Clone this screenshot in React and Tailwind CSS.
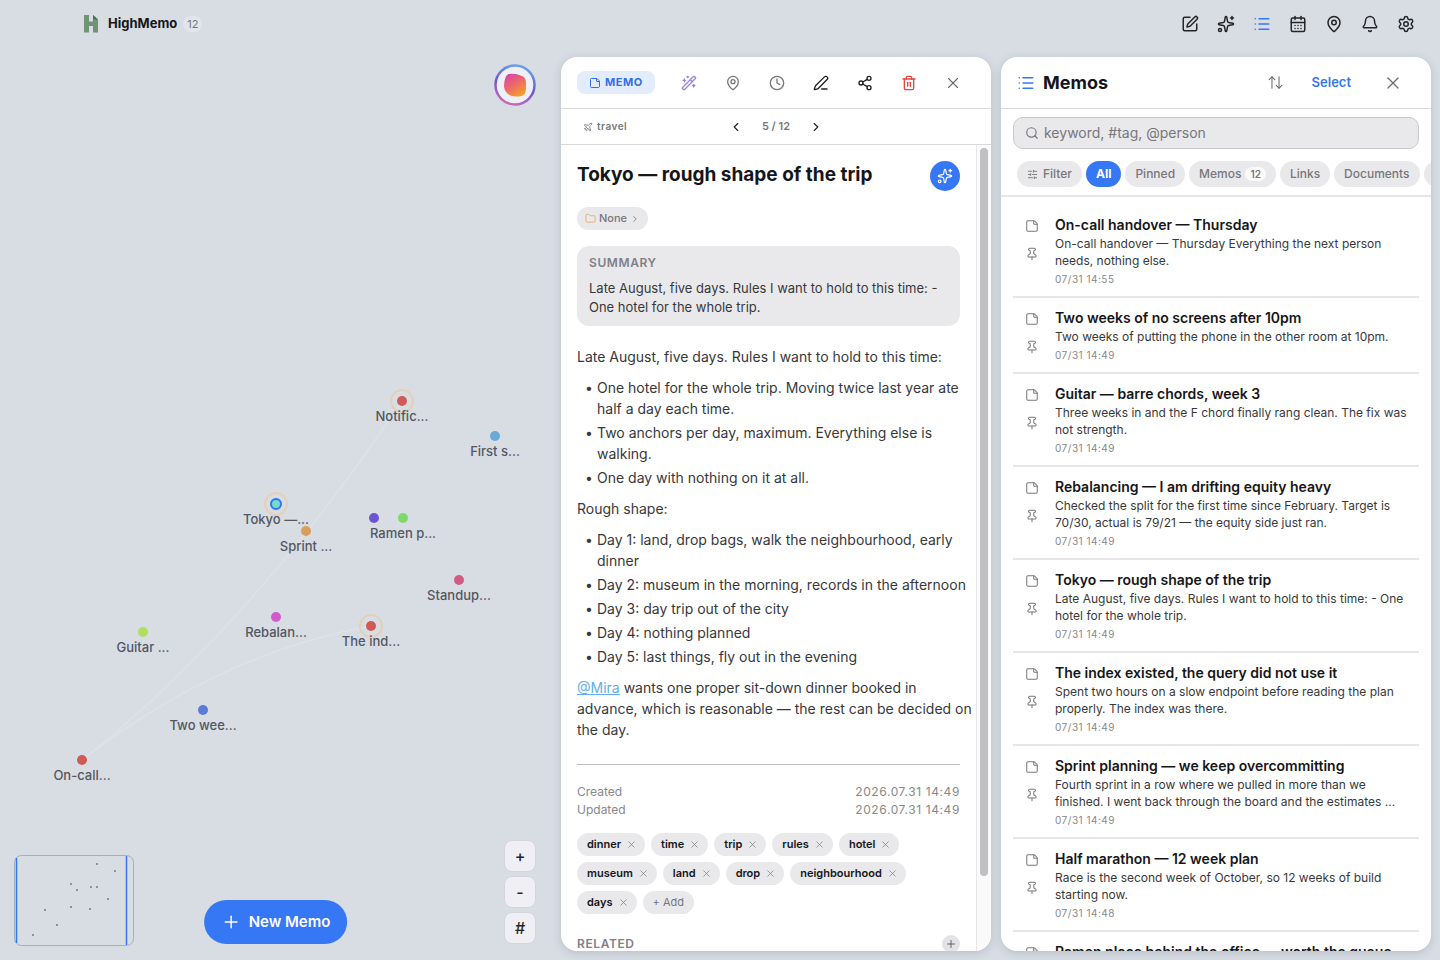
import React, { useState } from 'react'
import {
  ArrowUpDown, Bell, CalendarDays, ChevronLeft, ChevronRight, Clock, Folder, List, MapPin,
  PenLine, Pin, Plane, Plus, Search, Settings, Share2, SlidersHorizontal, Sparkles,
  SquarePen, StickyNote, Trash2, WandSparkles, X,
} from 'lucide-react'

const NAV = [
  { label: 'Write', icon: SquarePen },
  { label: 'Assistant', icon: Sparkles },
  { label: 'Memos', icon: List, active: true },
  { label: 'Calendar', icon: CalendarDays },
  { label: 'Places', icon: MapPin },
  { label: 'Notifications', icon: Bell },
  { label: 'Settings', icon: Settings },
]

const ACTIONS = [
  { label: 'Magic edit', icon: WandSparkles, color: 'text-[#9c87e0]' },
  { label: 'Location', icon: MapPin, color: 'text-[#77777b]' },
  { label: 'History', icon: Clock, color: 'text-[#77777b]' },
  { label: 'Edit', icon: PenLine, color: 'text-[#1f1f21]' },
  { label: 'Share', icon: Share2, color: 'text-[#1f1f21]' },
  { label: 'Delete', icon: Trash2, color: 'text-[#e5453b]' },
]

const NODES = [
  { label: 'Notific...', x: 402, y: 353, color: '#d05a55', ring: true },
  { label: 'First s...', x: 495, y: 388, color: '#6aa9d8' },
  { label: 'Tokyo —...', x: 276, y: 456, color: '#76dbc8', ring: true, selected: true },
  { label: 'Sprint ...', x: 306, y: 483, color: '#d89e5c' },
  { label: '', x: 374, y: 470, color: '#6d54d0' },
  { label: 'Ramen p...', x: 403, y: 470, color: '#7fd966' },
  { label: 'Standup...', x: 459, y: 532, color: '#d05c85' },
  { label: 'Rebalan...', x: 276, y: 569, color: '#d05ccc' },
  { label: 'The ind...', x: 371, y: 578, color: '#d05a55', ring: true },
  { label: 'Guitar ...', x: 143, y: 584, color: '#b0df60' },
  { label: 'Two wee...', x: 203, y: 662, color: '#5b7bd8' },
  { label: 'On-call...', x: 82, y: 712, color: '#d05a55' },
]

const MAP_DOTS = [
  [83, 9], [101, 16], [57, 29], [63, 35], [77, 32], [83, 32],
  [94, 44], [57, 52], [76, 54], [31, 55], [43, 70], [19, 80],
]

const TAGS = ['dinner', 'time', 'trip', 'rules', 'hotel', 'museum', 'land', 'drop', 'neighbourhood', 'days']

const RULES = [
  'One hotel for the whole trip. Moving twice last year ate half a day each time.',
  'Two anchors per day, maximum. Everything else is walking.',
  'One day with nothing on it at all.',
]

const DAYS = [
  'Day 1: land, drop bags, walk the neighbourhood, early dinner',
  'Day 2: museum in the morning, records in the afternoon',
  'Day 3: day trip out of the city',
  'Day 4: nothing planned',
  'Day 5: last things, fly out in the evening',
]

const FILTERS = ['All', 'Pinned', 'Memos', 'Links', 'Documents', 'Images']

const MEMOS = [
  { title: 'On-call handover — Thursday', text: 'On-call handover — Thursday Everything the next person needs, nothing else.', date: '07/31 14:55' },
  { title: 'Two weeks of no screens after 10pm', text: 'Two weeks of putting the phone in the other room at 10pm.', date: '07/31 14:49' },
  { title: 'Guitar — barre chords, week 3', text: 'Three weeks in and the F chord finally rang clean. The fix was not strength.', date: '07/31 14:49' },
  { title: 'Rebalancing — I am drifting equity heavy', text: 'Checked the split for the first time since February. Target is 70/30, actual is 79/21 — the equity side just ran.', date: '07/31 14:49' },
  { title: 'Tokyo — rough shape of the trip', text: 'Late August, five days. Rules I want to hold to this time: - One hotel for the whole trip.', date: '07/31 14:49' },
  { title: 'The index existed, the query did not use it', text: 'Spent two hours on a slow endpoint before reading the plan properly. The index was there.', date: '07/31 14:49' },
  { title: 'Sprint planning — we keep overcommitting', text: 'Fourth sprint in a row where we pulled in more than we finished. I went back through the board and the estimates ...', date: '07/31 14:49' },
  { title: 'Half marathon — 12 week plan', text: 'Race is the second week of October, so 12 weeks of build starting now.', date: '07/31 14:48' },
  { title: 'Ramen place behind the office — worth the queue', text: 'Opens at 11:30 and the line starts before that.', date: '07/31 14:48' },
]

function Header() {
  return (
    <header className="flex h-12 shrink-0 items-center justify-between pl-[82px] pr-4">
      <div className="flex items-center">
        <svg viewBox="0 0 18 20" className="mr-2 h-5 w-[18px]" aria-hidden="true">
          <path d="M2 1h5v6.500h4V1l5 4.500V18.500h-5v-6.500h-4v6.500h-5z" fill="#6f9473" />
          <path d="M11 1l5 4.500h-5z" fill="#4b7352" />
        </svg>
        <h1 className="text-[13px] font-bold text-[#161618]">HighMemo</h1>
        <span className="ml-1.5 rounded-full bg-[#e3e5eb] px-1 text-[11px] leading-4 text-[#76767c]">12</span>
      </div>
      <nav className="flex" aria-label="Main">
        {NAV.map(({ label, icon: Icon, active }) => (
          <button key={label} aria-label={label} className={`flex h-9 w-9 items-center justify-center ${active ? 'text-[#3577f1]' : 'text-[#252528]'}`}>
            <Icon size={18} strokeWidth={2} />
          </button>
        ))}
      </nav>
    </header>
  )
}

function MiniMap() {
  return (
    <svg viewBox="0 0 121 91" className="absolute bottom-3.5 left-3.5 h-[91px] w-[121px]" role="img" aria-label="Map overview">
      <rect x="0.5" y="0.5" width="119" height="90" rx="7" fill="none" stroke="#a9adb5" />
      <path d="M2.500 3v85M112.500 1v89" stroke="#3577f1" strokeWidth="1.500" />
      {MAP_DOTS.map(([x, y]) => (
        <circle key={`${x}-${y}`} cx={x} cy={y} r="0.900" fill="#6c7078" />
      ))}
    </svg>
  )
}

function MemoMap() {
  return (
    <section className="relative min-w-0" aria-label="Memo map">
      <svg className="absolute inset-0 h-full w-full" aria-hidden="true">
        <path d="M82 712Q250 580 402 353M82 712Q220 605 371 578" fill="none" stroke="#dee2e8" strokeWidth="1.500" />
      </svg>

      {NODES.map(n => (
        <div key={`${n.x}-${n.y}`} className="absolute h-0 w-0" style={{ left: n.x, top: n.y }}>
          {n.ring && <span className="absolute -left-3 -top-3 h-6 w-6 rounded-full border-2 border-[#e2d0b8]" />}
          <span
            className={`absolute rounded-full ${n.selected ? '-left-1.5 -top-1.5 h-3 w-3 border-2 border-[#2f74f0]' : '-left-[5px] -top-[5px] h-2.5 w-2.5'}`}
            style={{ backgroundColor: n.color }}
          />
          <span className="absolute left-0 top-1.5 -translate-x-1/2 whitespace-nowrap text-[13px] font-medium leading-[18px] text-[#53575f]">{n.label}</span>
        </div>
      ))}

      <button aria-label="Account" className="absolute right-[15px] top-4 h-[42px] w-[42px]">
        <svg viewBox="0 0 42 42" aria-hidden="true">
          <defs>
            <linearGradient id="ring" x1="0.700" y1="0" x2="0.400" y2="1">
              <stop offset="0" stopColor="#67a2ef" />
              <stop offset="0.550" stopColor="#6d58cf" />
              <stop offset="1" stopColor="#c76bb8" />
            </linearGradient>
            <linearGradient id="blob" x1="0.200" y1="0" x2="0.800" y2="1">
              <stop offset="0" stopColor="#d945a5" />
              <stop offset="0.500" stopColor="#ee6b62" />
              <stop offset="1" stopColor="#f5a524" />
            </linearGradient>
          </defs>
          <circle cx="21" cy="21" r="19.500" fill="#efeff7" stroke="url(#ring)" strokeWidth="2.500" />
          <path d="M14.500 10q2-0.500 7.500 0q3 0.500 7 2.500q3 1.500 3 6.500v6q0 4-2.500 6q-2 1.500-7.500 1.500q-5 0-8-2.500q-4-3.500-4-8q0-5 1.500-8.500q1-3 3-3.500z" fill="url(#blob)" />
        </svg>
      </button>

      <MiniMap />
      <button className="absolute bottom-4 left-1/2 flex h-11 -translate-x-1/2 items-center gap-2 whitespace-nowrap rounded-full bg-[#3577f5] px-[17px] text-[15px] font-semibold text-white">
        <Plus size={20} strokeWidth={1.75} />
        New Memo
      </button>
      <div className="absolute bottom-4 right-[15px] flex flex-col gap-1">
        {['+', '-', '#'].map(c => (
          <button key={c} className="h-8 w-8 rounded-lg border border-[#d3d6dd] bg-[#efeff4] text-base font-medium leading-none text-[#252528]">{c}</button>
        ))}
      </div>
    </section>
  )
}

function BulletList({ items }) {
  return (
    <ul className="space-y-[3px] pl-2">
      {items.map(text => (
        <li key={text} className="flex before:w-3 before:shrink-0 before:content-['•']">{text}</li>
      ))}
    </ul>
  )
}

function MemoDetail() {
  return (
    <article className="my-[9px] flex min-h-0 min-w-0 flex-col overflow-hidden rounded-2xl bg-white shadow-[0_2px_10px_rgba(60,70,90,0.2)]">
      <div className="flex h-13 shrink-0 items-center justify-between border-b border-[#d9d9dd] px-4">
        <button className="flex h-[23px] items-center gap-1 rounded-lg bg-[#e3ecfd] px-3 text-[11px] font-bold tracking-wider text-[#2f6fe8]">
          <StickyNote size={12} />
          MEMO
        </button>
        <div className="flex">
          {ACTIONS.map(({ label, icon: Icon, color }) => (
            <button key={label} aria-label={label} className={`flex h-9 w-11 items-center justify-center ${color}`}>
              <Icon size={16} strokeWidth={2} />
            </button>
          ))}
          <button aria-label="Close memo" className="flex h-9 w-11 items-center justify-center text-[#6b6b6f]">
            <X size={18} strokeWidth={1.5} />
          </button>
        </div>
      </div>

      <div className="grid h-9 shrink-0 grid-cols-3 items-center border-b border-[#d9d9dd] px-[22px] text-[#77777b]">
        <span className="flex items-center gap-1 text-[10px] font-semibold tracking-wider">
          <Plane size={10} />
          travel
        </span>
        <div className="flex items-center justify-center gap-[19px] text-[11px] font-semibold">
          <button aria-label="Previous memo" className="text-[#252528]"><ChevronLeft size={14} /></button>
          <span>5 / 12</span>
          <button aria-label="Next memo" className="text-[#252528]"><ChevronRight size={14} /></button>
        </div>
      </div>

      <div className="flex min-h-0 flex-1">
        <div className="min-w-0 flex-1 overflow-hidden px-4 pt-4 text-[#38383b]">
          <div className="flex items-start justify-between">
            <h2 className="text-[19px] font-bold leading-7 text-[#161618]">Tokyo — rough shape of the trip</h2>
            <button aria-label="Ask assistant" className="flex h-[30px] w-[30px] items-center justify-center rounded-full bg-[#3577f5] text-white">
              <Sparkles size={16} strokeWidth={1.75} />
            </button>
          </div>

          <button className="mt-4 flex h-[23px] items-center gap-[3px] rounded-full bg-[#e9e9ec] px-2 text-[11px] font-medium text-[#77777b]">
            <Folder size={11} className="text-[#e3ad72]" />
            None
            <ChevronRight size={10} />
          </button>

          <div className="mt-4 rounded-xl bg-[#e9e9ec] px-3 pb-[9px] pt-2">
            <h3 className="text-xs font-semibold leading-[18px] tracking-wider text-[#808085]">SUMMARY</h3>
            <p className="mt-[7px] text-[13px] leading-[19px]">Late August, five days. Rules I want to hold to this time: - One hotel for the whole trip.</p>
          </div>

          <div className="-mr-3.5 mt-5 space-y-2.5 text-sm leading-[21px]">
            <p>Late August, five days. Rules I want to hold to this time:</p>
            <BulletList items={RULES} />
            <p>Rough shape:</p>
            <BulletList items={DAYS} />
            <p>
              <a href="#mira" className="text-[#64aee6] underline">@Mira</a> wants one proper sit-down dinner booked in advance, which is reasonable — the rest can be decided on the day.
            </p>
          </div>

          <dl className="mt-6 grid grid-cols-2 border-t border-[#bdbdc1] pt-[18px] text-xs leading-[18px] text-[#88888c]">
            <dt>Created</dt>
            <dd className="text-right tracking-wider">2026.07.31 14:49</dd>
            <dt>Updated</dt>
            <dd className="text-right tracking-wider">2026.07.31 14:49</dd>
          </dl>

          <div className="mt-3.5 flex flex-wrap gap-1.5">
            {TAGS.map(t => (
              <span key={t} className="flex h-[23px] items-center gap-[5px] rounded-full bg-[#e9e9ec] pl-2.5 pr-2 text-[11px] font-semibold text-[#161618]">
                {t}
                <button aria-label={`Remove ${t}`} className="text-[#77777b]"><X size={11} strokeWidth={1.5} /></button>
              </span>
            ))}
            <button className="h-[23px] rounded-full bg-[#e9e9ec] px-2.5 text-[11px] text-[#77777b]">+ Add</button>
          </div>

          <div className="mt-5 flex h-5 items-center justify-between">
            <h3 className="text-xs font-semibold leading-[18px] tracking-wider text-[#808085]">RELATED</h3>
            <button aria-label="Add related memo" className="flex h-[18px] w-[18px] items-center justify-center rounded-full bg-[#e3e3e6] text-[#55555a]">
              <Plus size={12} strokeWidth={1.75} />
            </button>
          </div>
        </div>
        <div className="w-[15px] shrink-0 border-l border-[#e6e6e8] bg-[#fafafa] px-[3px] py-[3px]">
          <div className="h-[91%] w-2 rounded-full bg-[#c0c0c2]" />
        </div>
      </div>
    </article>
  )
}

function MemoList() {
  const [filter, setFilter] = useState('All')

  return (
    <aside className="my-[9px] flex min-h-0 min-w-0 flex-col overflow-hidden rounded-2xl bg-white shadow-[0_2px_10px_rgba(60,70,90,0.2)]">
      <div className="flex h-13 shrink-0 items-center justify-between border-b border-[#d9d9dd] px-4">
        <h2 className="flex items-center gap-2 text-lg font-bold text-[#161618]">
          <List size={18} className="text-[#3577f1]" />
          Memos
        </h2>
        <div className="flex items-center text-[#6b6b6f]">
          <button aria-label="Sort" className="flex w-9 justify-center"><ArrowUpDown size={17} strokeWidth={1.5} /></button>
          <button className="pl-[18px] pr-5 text-[13px] font-semibold text-[#3577f1]">Select</button>
          <button aria-label="Close list" className="flex w-11 justify-center"><X size={20} strokeWidth={1.5} /></button>
        </div>
      </div>

      <div className="shrink-0 border-b-2 border-[#e6e6e8] pb-2 pt-2">
        <label className="mx-3 flex h-8 items-center gap-[5px] rounded-[10px] border border-[#c9c9cd] bg-[#e9e9ec] px-[11px] text-[#77777b]">
          <Search size={14} />
          <input type="search" aria-label="Search memos" placeholder="keyword, #tag, @person" className="min-w-0 flex-1 bg-transparent text-sm outline-none placeholder:text-[#77777b]" />
        </label>
        <div className="mt-3 flex gap-1 overflow-hidden pl-4">
          <button className="flex h-[26px] shrink-0 items-center gap-[5px] rounded-full bg-[#e9e9ec] px-2.5 text-xs font-medium text-[#77777b]">
            <SlidersHorizontal size={11} />
            Filter
          </button>
          {FILTERS.map(f => (
            <button
              key={f}
              onClick={() => setFilter(f)}
              className={`flex h-[26px] shrink-0 items-center gap-1 rounded-full px-2.5 text-xs ${filter === f ? 'bg-[#3577f5] font-bold text-white' : 'bg-[#e9e9ec] font-medium text-[#77777b]'}`}
            >
              {f}
              {f === 'Memos' && <span className="rounded-full bg-[#fafafa] px-[5px] text-[10px] font-semibold leading-[14px]">12</span>}
            </button>
          ))}
        </div>
      </div>

      <ul className="min-h-0 flex-1 overflow-hidden px-3 pt-2">
        {MEMOS.map(m => (
          <li key={m.title} className="flex border-b-2 border-[#e6e6e8] pb-2 pt-[9px]">
            <div className="flex w-[42px] shrink-0 flex-col items-start gap-3.5 pl-3 pt-[5px] text-[#77777b]">
              <StickyNote size={14} strokeWidth={1.75} />
              <button aria-label={`Pin ${m.title}`}><Pin size={14} strokeWidth={1.75} /></button>
            </div>
            <div className="min-w-0 flex-1 pr-2">
              <h3 className="truncate text-sm font-semibold leading-[21px] text-[#161618]">{m.title}</h3>
              <p className="text-xs leading-[17px] text-[#38383b]">{m.text}</p>
              <time className="mt-px block text-[10px] leading-[18px] tracking-wider text-[#88888c]">{m.date}</time>
            </div>
          </li>
        ))}
      </ul>
    </aside>
  )
}

export default function App() {
  return (
    <div className="flex h-screen flex-col overflow-hidden bg-[#d8dde4] font-['Inter','Liberation_Sans',sans-serif]">
      <Header />
      <main className="grid min-h-0 flex-1 grid-cols-[551fr_430fr_430fr] grid-rows-[minmax(0,1fr)] gap-2.5 pr-[9px]">
        <MemoMap />
        <MemoDetail />
        <MemoList />
      </main>
    </div>
  )
}
